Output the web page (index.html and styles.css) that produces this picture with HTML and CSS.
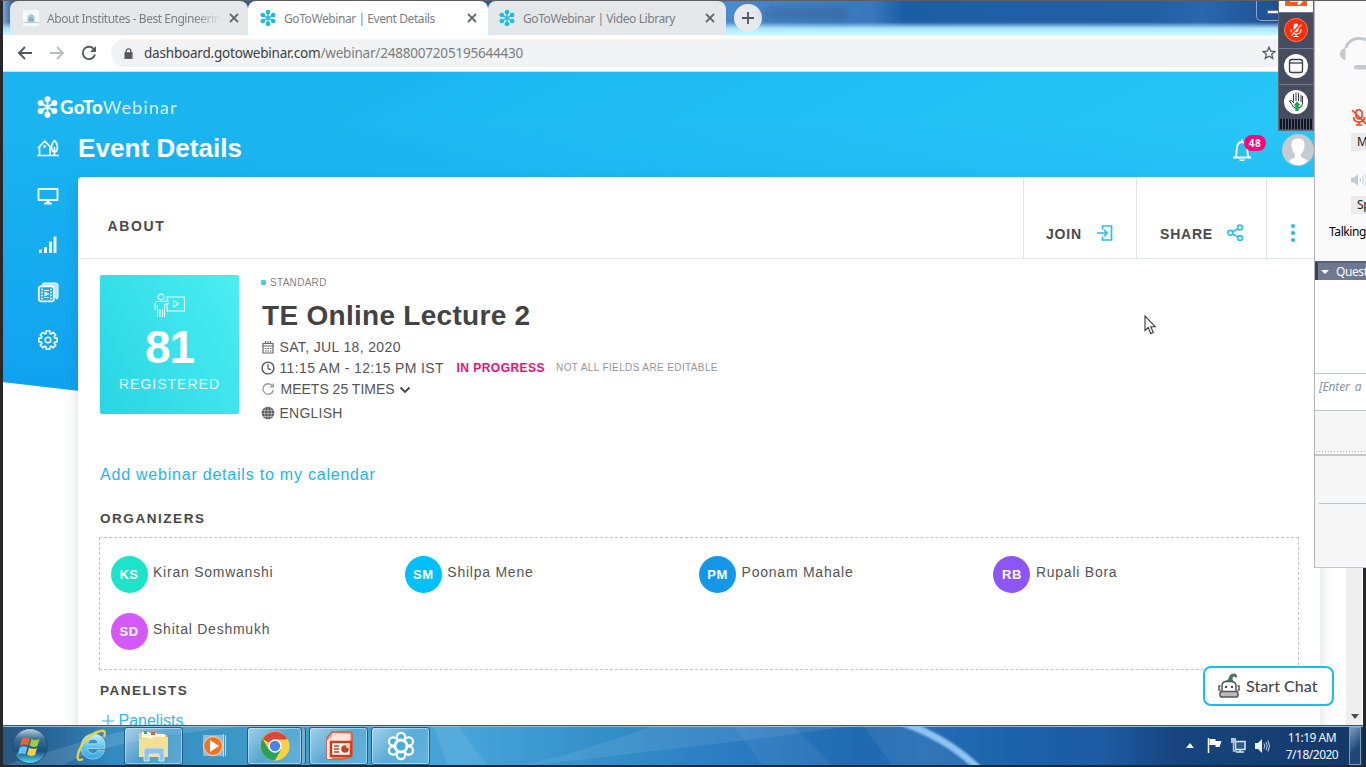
FILE: index.html
```html
<!DOCTYPE html>
<html lang="en">
<head>
<meta charset="utf-8">
<title>GoToWebinar | Event Details</title>
<link rel="stylesheet" href="styles.css">
</head>
<body>
<svg width="0" height="0" class="defs">
  <defs>
    <symbol id="daisy" viewBox="0 0 20 20"><g stroke="currentColor" stroke-width="1.8" fill="currentColor"><path d="M10 2.500v15M3.500 6.200l13 7.600M16.500 6.200l-13 7.600"/><circle cx="10" cy="2.600" r="2"/><circle cx="10" cy="17.400" r="2"/><circle cx="3.500" cy="6.200" r="2"/><circle cx="16.500" cy="6.200" r="2"/><circle cx="3.500" cy="13.800" r="2"/><circle cx="16.500" cy="13.800" r="2"/></g></symbol>
    <symbol id="close" viewBox="0 0 10 10"><path d="M1 1l8 8M9 1L1 9" stroke="#65686c" stroke-width="1.8"/></symbol>
    <linearGradient id="glass" x1="0" y1="0" x2="0" y2="1"><stop offset="0" stop-color="#bcd9e6"/><stop offset=".3" stop-color="#3f6c96"/><stop offset=".65" stop-color="#14527f"/><stop offset="1" stop-color="#5ee0f8"/></linearGradient>
    <linearGradient id="iebody" x1="0" y1="0" x2="0" y2="1"><stop offset="0" stop-color="#c4f1fd"/><stop offset=".5" stop-color="#5cc6f0"/><stop offset="1" stop-color="#3aa5de"/></linearGradient>
  </defs>
</svg>
<div class="screen">
  <header class="tabstrip">
    <div class="tab tab-first"><svg class="fav" viewBox="0 0 16 16"><path fill="#f4fafc" d="M0 0h16v16H0z"/><path d="M0 12h16v1H0z" fill="#a9cfdc"/><path d="M4.500 12V8q0-3 3.500-4 3.500 1 3.500 4v4z" fill="#a3cbd8"/><path d="M6.500 11V8.500M8 11V7M9.500 11V8.500" stroke="#6d9fb3"/></svg><span class="tab-title fade">About Institutes - Best Engineerin</span><svg class="x"><use href="#close"/></svg></div>
    <div class="tab active"><svg class="fav daisy"><use href="#daisy"/></svg><span class="tab-title">GoToWebinar | Event Details</span><svg class="x"><use href="#close"/></svg></div>
    <div class="tab tab-last"><svg class="fav daisy"><use href="#daisy"/></svg><span class="tab-title">GoToWebinar | Video Library</span><svg class="x"><use href="#close"/></svg></div>
    <div class="newtab"><svg width="12" height="12" viewBox="0 0 12 12"><path d="M6 0v12M0 6h12" stroke="#50565c" stroke-width="1.800"/></svg></div>
    <div class="ghost"></div>
    <div class="minimize"><i></i></div>
  </header>
  <div class="toolbar">
    <svg class="nav" viewBox="0 0 16 16"><path d="M15 8H2M8 2L2 8l6 6" fill="none" stroke="#55595d" stroke-width="1.900"/></svg>
    <svg class="nav" viewBox="0 0 16 16"><path d="M1 8h13M8 2l6 6-6 6" fill="none" stroke="#b9bbbd" stroke-width="1.900"/></svg>
    <svg class="nav" viewBox="0 0 16 16"><path d="M13.500 5A6.200 6.200 0 1 0 14 9.500" fill="none" stroke="#55595d" stroke-width="1.900"/><path d="M15 1v6H9z" fill="#55595d"/></svg>
    <div class="urlbar">
      <svg width="9" height="11" viewBox="0 0 10 12"><path d="M.5 4.500h9V12h-9z" fill="#55595d"/><path d="M2.500 5V3a2.500 2.200 0 0 1 5 0v2" fill="none" stroke="#55595d" stroke-width="1.400"/></svg>
      <span class="url">dashboard.gotowebinar.com<span>/webinar/2488007205195644430</span></span>
      <svg class="star" viewBox="0 0 14 14"><path d="M7 1.200l1.700 3.900 4.200.4-3.200 2.800 1 4.100L7 10.200l-3.700 2.200 1-4.100L1.100 5.500l4.200-.4z" fill="none" stroke="#55595d" stroke-width="1.300"/></svg>
    </div>
  </div>
  <div class="viewport">
    <main class="page">
      <div class="hero"></div>
      <div class="topbar">
        <div class="logo"><svg width="21" height="22"><use href="#daisy"/></svg><span class="goto">GoTo</span><span class="webinar">Webinar</span></div>
        <div class="title-row">
          <svg class="home" viewBox="0 0 22 18"><path d="M0 16.500h22M2.500 16V7.500L7.800 2 13 7.500V16M1 9l6.800-7 6.400 7M17.500 1.500c-3 2.500-4 7.500-1.700 11h3.400c2.300-3.500 1.300-8.500-1.700-11zM17.500 8v8" fill="none" stroke="#fff" stroke-width="1.700"/><circle cx="7.500" cy="7.500" r="1.400" fill="#fff"/></svg>
          <h1>Event Details</h1>
          <div class="bell"><svg width="20" height="24" viewBox="0 0 20 24"><path d="M1 19.500h18M3.500 19c1.300-2 1-4 1.200-8 .3-5 2.300-7 5.300-7s5 2 5.300 7c.2 4-.1 6 1.200 8M10 4V1.500" fill="none" stroke="#fff" stroke-width="1.900"/><path d="M7 21.500h6l-1 1.500H8z" fill="#fff"/></svg><span class="badge">48</span></div>
          <svg class="user" viewBox="0 0 32 32"><circle cx="16" cy="16" r="16" fill="#c6cbd1"/><path d="M16 4.500c-4.500 0-7 2.500-6.500 7 .3 4 1.500 7 3.500 8.500v3c-1.500 1.500-4 2-6 3.500 2 3 5 4.500 9 4.500s7.500-1.500 9.500-4.500c-2-1.500-5-2-6.500-3.500v-3c2-1.500 3.200-4.500 3.500-8.500.5-4.500-2-7-6.500-7z" fill="#fff"/></svg>
        </div>
      </div>
      <div class="body">
        <nav class="side">
          <svg viewBox="0 0 22 18"><path d="M1.500 1.500h19v11h-19z" fill="none" stroke="#effaff" stroke-width="1.900" stroke-linejoin="round"/><path d="M9.500 13h3v2h2.500v2H7v-2h2.500z" fill="#effaff"/></svg>
          <svg viewBox="0 0 22 18"><path d="M2 14h3v3.500H2zM7 11.500h3v6H7zM12 6h3v11.500h-3zM16.500 1h3v16.500h-3z" fill="#effaff"/></svg>
          <svg viewBox="0 0 22 20"><path d="M5 2.500Q5 .5 7 .5h12q2 0 2 2v12q0 2-2 2" fill="#b9e6fc" stroke="#fff"/><rect x="1.800" y="3.800" width="15" height="15" rx="2" fill="#1fa9f1" stroke="#fff" stroke-width="1.800"/><path d="M4 7h2M4 10h2M4 13h2M4 16h2M13 7h2M13 10h2M13 13h2M13 16h2" stroke="#fff" stroke-width="1.500"/><path d="M7 8h5M7 15h5" stroke="#fff"/><path d="M7.500 9l5 2.500-5 2.500z" fill="#fff"/></svg>
          <svg viewBox="0 0 22 22"><g transform="translate(11 10.500)" fill="none" stroke="#effaff" stroke-linejoin="round"><path stroke-width="1.800" d="M6.980-2.130L9.500-1.900V1.900L6.980 2.130 6.450 3.430 8.100 5.500 5.500 8.100 3.430 6.450 2.130 6.980 1.900 9.500H-1.900L-2.130 6.980-3.430 6.450-5.500 8.100-8.100 5.500-6.450 3.430-6.980 2.130-9.500 1.900V-1.900L-6.980-2.130-6.450-3.430-8.100-5.500-5.500-8.100-3.430-6.450-2.130-6.980-1.900-9.500H1.900L2.130-6.980 3.430-6.450 5.500-8.100 8.100-5.500 6.450-3.430z"/><circle r="2.900" stroke-width="1.700"/></g></svg>
        </nav>
        <section class="card">
          <div class="card-head">
            <h2>ABOUT</h2>
            <div class="action join">JOIN<svg width="16" height="16" viewBox="0 0 16 16"><path d="M5.500 4.500V1h9v14h-9v-3.500M0 8h10M7 4.800L10.200 8 7 11.200" fill="none" stroke="#2bbdf3" stroke-width="1.700"/></svg></div>
            <div class="action share">SHARE<svg width="17" height="18" viewBox="0 0 17 18"><g fill="none" stroke="#2bbdf3" stroke-width="1.600"><circle cx="13" cy="3.500" r="2.400"/><circle cx="13" cy="14" r="2.400"/><circle cx="3.300" cy="8.800" r="2.400"/><path d="M5.400 7.700L11 4.700M5.400 10l5.600 2.900"/></g></svg></div>
            <div class="action more"><svg width="6" height="20" viewBox="0 0 6 20"><g fill="#2bb9ee"><circle cx="3" cy="3" r="2.100"/><circle cx="3" cy="10" r="2.100"/><circle cx="3" cy="17" r="2.100"/></g></svg></div>
          </div>
          <div class="summary">
            <div class="tile">
              <svg width="31" height="26" viewBox="0 0 31 26"><g fill="none" stroke="#e4fdfd" stroke-width="1.100"><circle cx="7" cy="4" r="2.900"/><path d="M13 8V4h17.500v14H13v-7M19.500 7.500v6.500l5-3.200zM1 17v-5q0-3.500 3-3.500h6l5-.5M3.500 24V12M3.500 15v9M6 24v-8M8.500 24v-8M10.500 24V11.500l4.500-1"/></g></svg>
              <strong>81</strong><span>REGISTERED</span>
            </div>
            <div class="info">
              <div class="kind"><i></i>STANDARD</div>
              <h3>TE Online Lecture 2</h3>
              <div class="line date"><svg viewBox="0 0 14 14"><path d="M2 3.500h10v9.500H2zM2 6h10M4.500 1v3M9.500 1v3M7 1v3M4 8.500h1.500M6.500 8.500H8M9 8.500h1.500M4 11h1.500M6.500 11H8M9 11h1.500" fill="none" stroke="#666" stroke-width="1.200"/></svg><span>SAT, JUL 18, 2020</span></div>
              <div class="line time"><svg viewBox="0 0 14 14"><circle cx="7" cy="7" r="5.900" fill="none" stroke="#555" stroke-width="1.400"/><path d="M7 3v4.300l3 1.700" fill="none" stroke="#555" stroke-width="1.200"/></svg><span>11:15 AM - 12:15 PM IST</span><b>IN PROGRESS</b><small>NOT ALL FIELDS ARE EDITABLE</small></div>
              <div class="line meets"><svg viewBox="0 0 14 14"><path d="M11.500 4A5.200 5.200 0 1 0 12.300 8M12.300 1.500v3.300H9" fill="none" stroke="#999" stroke-width="1.300"/></svg><span>MEETS 25 TIMES</span><svg class="chev" viewBox="0 0 12 8"><path d="M1.500 1.500L6 6l4.500-4.500" fill="none" stroke="#444" stroke-width="1.900"/></svg></div>
              <div class="line lang"><svg viewBox="0 0 14 14"><circle cx="7" cy="7" r="6.300" fill="#555"/><path d="M1 4.500h12M.5 7.500h13M1.500 10.500h11M7 .5v13M4.500 1.200q-2 5.800 0 11.600M9.500 1.200q2 5.800 0 11.600" fill="none" stroke="#c8c8c8" stroke-width=".7"/></svg><span>ENGLISH</span></div>
            </div>
          </div>
          <a class="cal">Add webinar details to my calendar</a>
          <h4>ORGANIZERS</h4>
          <div class="people">
            <div><i class="ks">KS</i>Kiran Somwanshi</div>
            <div><i class="sm">SM</i>Shilpa Mene</div>
            <div><i class="pm">PM</i>Poonam Mahale</div>
            <div><i class="rb">RB</i>Rupali Bora</div>
            <div><i class="sd">SD</i>Shital Deshmukh</div>
          </div>
          <h4 class="pan">PANELISTS</h4>
          <a class="addpan"><svg width="12" height="12" viewBox="0 0 12 12"><path d="M6 0v12M0 6h12" stroke="#2bb9ee" stroke-width="1.200"/></svg>Panelists</a>
        </section>
      </div>
    </main>
    <div class="scroll"><i></i></div>
  </div>
  <footer class="taskbar">
    <svg class="wall" viewBox="0 0 1360 40" preserveAspectRatio="none"><g fill="#fff"><path d="M0 40Q60 20 140 0h100Q90 16 60 40z" opacity=".12"/><path d="M430 0h25l30 40h-40zM520 40Q720 18 850 0H650Q580 25 520 40z" opacity=".08"/><path d="M730 0h60l40 40h-70zM860 0h60l60 40h-90z" opacity=".06"/></g><path class="arc" d="M900-3Q944 12 976 43" fill="none" stroke="#8fc3f2" stroke-width="7"/></svg>
    <div class="start"><svg width="38" height="38" viewBox="0 0 38 38"><circle cx="19" cy="19" r="17.500" fill="url(#glass)" stroke="#244c75"/><path d="M11 12q4-2.500 8-.5l-2 7q-4-2-8 .3z" fill="#e8652f"/><path d="M20.500 12q4 2 8-.3l-2 7.300q-4 2-8-.4z" fill="#9bcf43"/><path d="M8.700 20.500q4-2.300 7.800-.2l-2 7q-3.700-2-7.700.4z" fill="#65c1ec"/><path d="M18 20.700q4 2.200 8 .2l-2 7q-4 2.200-8-.3z" fill="#fbd23d"/></svg></div>
    <div class="ie"><svg width="32" height="34" viewBox="0 0 32 34"><path fill-rule="evenodd" d="M17 5C10 5 5 10.500 5 18s5 12 12 12c6 0 10-3.500 11.500-8.500h-7Q20 24.500 17 24.500q-5-.3-5.300-5h17.200Q30 5 17 5zm-5.200 9.800Q12.500 10.300 17 10.300t5.200 4.500z" fill="url(#iebody)" stroke="#b9ebfb" stroke-width=".6"/><path d="M7 30Q-1 34 3 22 10 6 23 2.500 31-.5 28 8" fill="none" stroke="#efcf3d" stroke-width="2.400"/></svg></div>
    <div class="app"><svg width="34" height="32" viewBox="0 0 34 32"><path d="M2 3h5l2 2h21v22H2z" fill="#e9cf76"/><path d="M5 2h7v6H5zM12 3h8v6h-8zM20 4h8v6h-8z" fill="#fff8dc"/><path d="M7 1h3v3H7z" fill="#4ba757"/><path d="M14 2h4v3h-4z" fill="#dc5b38"/><path d="M2 9h13l2-2h14v20H2z" fill="#f5df92"/><path d="M7 31V20q0-2 3-2h14q3 0 3 2v11h-5v-7H12v7z" fill="#8cc4ec" stroke="#cde9fa"/></svg></div>
    <div class="wmp"><svg width="26" height="26" viewBox="0 0 26 26"><path d="M1 2h20v21H1z" fill="#83bce4"/><path d="M21.500 1v23M23.500 2v21" stroke="#b8e3f8"/><circle cx="11" cy="13" r="9.500" fill="#ed7426" stroke="#f6c098" stroke-width="1.500"/><path d="M8 7l9 6-9 6z" fill="#fff"/></svg></div>
    <div class="app chrome"><svg width="30" height="30" viewBox="0 0 30 30"><circle cx="15" cy="15" r="14.500" fill="#fad047"/><path d="M15 15L2.500 8A14.500 14.500 0 0 1 27.600 8z" fill="#dd4638"/><path d="M15 15l-6.300 3.600L2.500 7.800A14.500 14.500 0 0 0 15 29.500l6.300-11z" fill="#2ba25a"/><path d="M15 8.500h12.800A14.500 14.500 0 0 1 15 29.500l6.500-11z" fill="#fad047"/><circle cx="15" cy="15" r="6.700" fill="#fff"/><circle cx="15" cy="15" r="5.200" fill="#4b84e8"/></svg></div>
    <div class="app ppt"><svg width="30" height="32" viewBox="0 0 30 32"><path d="M3 8l5-6h18q2 0 2 3v20q-5 4-11 4H3z" fill="#efac91" stroke="#df5a35" stroke-width="1.500"/><path d="M3 10q5-1 6-7l17 1v8H8v17H3z" fill="#fbe5dc"/><rect x="7" y="12" width="20" height="14" fill="#fff" stroke="#cf3e1c" stroke-width="2.500"/><path d="M10 16h5M10 19h5M10 22h5" stroke="#c63b18" stroke-width="1.700"/><circle cx="21" cy="19" r="3.800" fill="#cf3e1c"/><path d="M22 18v-4h4v4z" fill="#ffc8ac"/></svg></div>
    <div class="app gotoapp"><svg width="28" height="30" viewBox="0 0 28 30"><g fill="#45aede" stroke="#fff" stroke-width="2.300"><circle cx="14" cy="6" r="4.200"/><circle cx="14" cy="24" r="4.200"/><circle cx="6.200" cy="10.500" r="4.200"/><circle cx="21.800" cy="10.500" r="4.200"/><circle cx="6.200" cy="19.500" r="4.200"/><circle cx="21.800" cy="19.500" r="4.200"/></g><circle cx="14" cy="15" r="7.500" fill="#fff"/><circle cx="14" cy="15" r="4.600" fill="#45aede"/></svg></div>
    <div class="tray">
      <svg width="8" height="5" viewBox="0 0 8 5"><path d="M0 5l4-5 4 5z" fill="#e6f2f8"/></svg>
      <svg width="15" height="15" viewBox="0 0 15 15"><path d="M1.500 0v15" stroke="#fff" stroke-width="1.500"/><path d="M2.500 1h6v2h6l-2 6h-4V7h-6z" fill="#fff"/></svg>
      <svg width="15" height="15" viewBox="0 0 15 15"><path d="M4.500 3.500h9.500v8H4.500zM9 12v2M5 14h8" fill="#2b5f91" stroke="#dfe9ef" stroke-width="1.500"/><path d="M0 0h5v5H0z" fill="#bac3c9"/><path d="M2.500 5v8H6" fill="none" stroke="#bac3c9" stroke-width="1.500"/></svg>
      <svg width="15" height="14" viewBox="0 0 15 14"><path d="M0 4h3l4-4v14l-4-4H0z" fill="#edf2f4"/><path d="M9 4.500q1.500 2.500 0 5M11 3q2.500 4 0 8M13 1.500q3 5.500 0 11" fill="none" stroke="#bdd3e4"/></svg>
    </div>
    <div class="clock"><span>11:19 AM</span><span>7/18/2020</span></div>
    <div class="desk"></div>
  </footer>

  <svg class="cursor" viewBox="0 0 12 20"><path d="M1 1v14.500l3.300-3 2.400 6 2.600-1.100-2.500-5.700h4.500z" fill="#fff" stroke="#33343c" stroke-width="1.100"/></svg>
  <div class="chat"><svg width="22" height="26" viewBox="0 0 22 26"><g fill="none" stroke="#555" stroke-width="1.500"><path d="M4 18v-5q0-4 3.500-4.500h6Q18 9 18 13v5"/><path d="M2.500 13H1v4h1.500M19.500 13H21v4h-1.500"/></g><rect x="2" y="18.500" width="18" height="5.500" rx="1.500" fill="#bbb" stroke="#555" stroke-width="1.500"/><circle cx="8" cy="14" r="1.200" fill="#444"/><circle cx="14" cy="14" r="1.200" fill="#444"/><path d="M7 8.500q4-.5 4.500-4.500 1-3.500 5-3 2.500.3 2 3.200-3-2.200-4.300 0-.8 2 .8 4.300z" fill="#477b67" stroke="#41524c" stroke-width=".8"/></svg>Start Chat</div>

  <aside class="grab">
    <div class="g-arrow"><i><svg width="22" height="6" viewBox="0 0 22 6"><path d="M5 .5h11M16.500-1v2L13 4.500" fill="none" stroke="#fff" stroke-width="2.500"/></svg></i></div>
    <div class="g-cell"><svg viewBox="0 0 24 24"><circle cx="12" cy="12" r="11.500" fill="#ff2d0a" stroke="#ff7b5e"/><rect x="9.500" y="5.500" width="5" height="8.500" rx="2.500" fill="#fff"/><path d="M7 11.500q0 4.500 5 4.500t5-4.500M12 16v2.500M9.500 18.500h5" fill="none" stroke="#fff" stroke-width="1.200"/><path d="M6.500 17.500l11-12" stroke="#ff2d0a" stroke-width="2.500"/><path d="M7 18L17.500 6.500" stroke="#fff" stroke-width="1.100"/></svg></div>
    <div class="g-cell"><svg viewBox="0 0 24 24"><circle cx="12" cy="12" r="12" fill="#fff"/><rect x="5.500" y="5.500" width="13" height="13" rx="2.200" fill="none" stroke="#3a3d49" stroke-width="1.300"/><path d="M5.500 9h13" stroke="#3a3d49" stroke-width="1.300"/></svg></div>
    <div class="g-cell"><svg viewBox="0 0 24 24"><circle cx="12" cy="12" r="12" fill="#fff"/><path d="M9.500 11.500V4M12 11V2.500M14.500 11V3M17 12V5M18.500 6v7q0 4.500-4 5h-3Q9 17.500 8 14.500l-2.500-3.500 2-.5L10 13" fill="none" stroke="#33363f" stroke-width="1"/><path d="M13 11.500l4 4h-2.300V21h-3.400v-5.500H9.500z" fill="#14a653"/></svg></div>
    <div class="g-grip"></div>
  </aside>

  <aside class="panel">
    <div class="audio">
      <svg class="headset" viewBox="0 0 27 36"><path d="M7 13Q9 5 18 3.500q5-.5 9 1.500" fill="none" stroke="#c3c9cf" stroke-width="3"/><path d="M6.500 13v12Q1 24 1 19t5.500-6z" fill="#c3c9cf"/><rect x="15" y="30" width="14" height="4.500" rx="2.200" fill="#c3c9cf"/></svg>
      <svg class="mute" viewBox="0 0 15 17"><path d="M5 2q3-3 6 1v5q-3 4-6 0zM2.500 8q0 5 5.500 5t5.500-5M8 13v3M5 16h6M1 1l14 14" fill="none" stroke="#ff3b16" stroke-width="1.600"/></svg>
      <span class="btn">Mute</span>
      <svg class="speaker" viewBox="0 0 15 12"><path d="M0 3.500h3L7 0v12L3 8.500H0z" fill="#c3cdd5"/><path d="M9 4q1.300 2 0 4M11.500 2q2.500 4 0 8M14 .5q3 5.500 0 11" fill="none" stroke="#c3cdd5"/></svg>
      <span class="btn">Speaker</span>
      <span class="talk">Talking:</span>
    </div>
    <div class="q-head"><i></i>Questions</div>
    <div class="q-log"></div>
    <div class="q-input">[Enter a question]</div>
    <div class="q-foot"></div>
    <div class="q-id"></div>
  </aside>
</div>
</body>
</html>
```
FILE: styles.css
```css
* { box-sizing: border-box; }
body { margin: 0; font-family: "Liberation Sans", Arial, sans-serif; color: #4a4a4a; }
svg { display: block; flex: none; }
h1, h2, h3, h4 { margin: 0; }
.defs { position: absolute; }
.screen { position: relative; width: 1366px; height: 767px; overflow: hidden; background: #26282b; border: solid #26282b; border-width: 1px 0 2px 3px; border-top-color: #5c5f61; padding-right: 3px; display: flex; flex-direction: column; }

.tabstrip { height: 34px; flex: none; display: flex; background: linear-gradient(180deg, transparent 62%, #a9e3fa 80%, #c2f5ff 95%), linear-gradient(90deg, #7da4d2 0, #2c5ea4 10px, #1f59a2 700px, #4c8acb 725px, #3877bb 870px, #1c5ea5 900px, #235fa3 1150px, #2867ac 1200px, #1d4f8e 1280px); }
.tab { width: 238px; height: 34px; padding: 0 11px 0 12px; display: flex; align-items: center; background: #e5e8eb; border-radius: 8px 8px 0 6px; font: 12px "Noto Sans", "Open Sans", sans-serif; color: #7b7e82; }
.tab-first { margin-left: 7px; border-radius: 8px; padding-right: 9px; }
.tab-last { padding-left: 11px; }
.tab.active { background: #fff; width: 240px; border-radius: 8px 8px 0 0; }
.fav { width: 16px; height: 16px; margin-right: 8px; }
.tab-first .fav { margin-left: 1px; }
.daisy { color: #1ebddd; }
.tab-title { flex: 1; white-space: nowrap; overflow: hidden; letter-spacing: -.42px; }
.fade { letter-spacing: -.46px; margin-right: 8px; -webkit-mask-image: linear-gradient(90deg, #000 85%, transparent); mask-image: linear-gradient(90deg, #000 85%, transparent); }
.x { width: 10px; height: 10px; }
.newtab { width: 28px; height: 28px; margin: 3px 0 0 8px; border-radius: 50%; background: #e6eaed; display: grid; place-items: center; }
.ghost { width: 84px; height: 13px; margin: 6px 0 0 2px; background: #315784; opacity: .4; filter: blur(4px); }
.minimize { margin-left: 408px; width: 40px; height: 20px; border: 1px solid #8ba9c9; border-top: 0; border-radius: 0 0 0 5px; padding: 9px 0 0 10px; }
.minimize i { display: block; width: 12px; height: 4px; background: #f2eeee; border: 1px solid #69788c; }

.toolbar { height: 37px; flex: none; display: flex; align-items: center; background: #fff; border-bottom: 1px solid #bce6f4; padding-left: 14px; }
.nav { width: 16px; height: 16px; margin-right: 16px; }
.urlbar { flex: 1; height: 28px; border-radius: 14px 0 0 14px; margin-left: -2px; padding-left: 13px; display: flex; align-items: center; background: #f1f3f4; }
.url { margin-left: 11px; font: 13.500px "Noto Sans", "Open Sans", sans-serif; color: #3c3f42; white-space: nowrap; letter-spacing: -.2px; }
.url span { color: #7a7d80; }
.star { width: 14px; height: 14px; margin-left: 739px; }

.viewport { flex: 1; min-height: 0; display: flex; }
.page { flex: 1; position: relative; min-width: 0; overflow: hidden; background: #fff; }
.hero { position: absolute; inset: 0 0 auto 0; height: 465px; background: linear-gradient(153deg, #1cb5f2 0, #1ab5f0 15%, #20bdf3 35%, #28c6f6 60%, #2acbfa 100%); clip-path: polygon(0 0, 100% 0, 100% 100%, 0 310px); }
.hero::after { content: ""; position: absolute; inset: 0; background: linear-gradient(180deg, transparent 50px, #0b9bef 340px); opacity: .85; }
.topbar { position: relative; height: 105px; padding: 23px 0 0 34px; color: #fff; }
.logo { display: flex; align-items: center; height: 24px; font-family: Lato, sans-serif; font-size: 18px; }
.goto { font-weight: 900; margin-left: 2px; font-size: 18.500px; letter-spacing: .4px; }
.webinar { font-weight: 400; letter-spacing: 1.100px; opacity: .85; }
.title-row { display: flex; align-items: center; height: 34px; margin-top: 12px; }
.home { width: 22px; height: 18px; }
h1 { font-size: 26px; line-height: 30px; letter-spacing: .06px; margin-left: 19px; width: 1154px; }
.bell { position: relative; width: 50px; height: 24px; margin-top: 4px; }
.badge { position: absolute; left: 12px; top: -3px; width: 22px; height: 16px; border-radius: 8px; background: #f40b7b; font: 700 10px/16px "Noto Sans", sans-serif; letter-spacing: .5px; text-align: center; }
.user { width: 32px; height: 32px; margin-top: 4px; }
.body { display: flex; position: relative; }
.side { width: 75px; padding: 9px 0 0 34px; display: flex; flex-direction: column; gap: 27px; }
.side svg { width: 22px; height: 21px; }
.card { width: 1242px; height: 560px; background: #fff; border-radius: 4px 4px 0 0; box-shadow: 0 6px 14px rgba(60, 80, 90, .2); }
.card-head { display: flex; height: 82px; border-bottom: 1px solid #e1e4ea; }
h2 { font-size: 14px; letter-spacing: 1.650px; width: 945px; padding: 41px 0 0 29.500px; line-height: 16px; }
.action { display: flex; align-items: center; padding-top: 32px; border-left: 1px solid #e1e4ea; font-weight: 700; font-size: 14px; letter-spacing: .8px; }
.action svg { margin-top: -1px; }
.join { width: 113px; padding-left: 22px; }
.join svg { margin-left: 15px; }
.share { width: 130px; padding-left: 23px; }
.share svg { margin-left: 14px; }
.more { width: 54px; padding-left: 23px; }
.summary { display: flex; padding: 16px 0 0 22px; }
.tile { width: 139px; height: 139px; border-radius: 2px; background: linear-gradient(60deg, #29d5e3, #4beef2); color: #fff; display: flex; flex-direction: column; align-items: center; padding-top: 18px; }
.tile strong { font-size: 46px; line-height: 48px; margin-top: 4px; letter-spacing: -1px; }
.tile span { font-size: 14px; letter-spacing: 1px; line-height: 16px; margin-top: 5px; color: #e0fcfc; }
.info { margin-left: 22px; }
.kind { display: flex; align-items: center; height: 15px; font-size: 10px; letter-spacing: .3px; color: #7f7f86; }
.kind i { width: 5px; height: 5px; border-radius: 1px; background: #4dd0d8; margin-right: 4px; }
h3 { font-size: 28px; letter-spacing: .29px; line-height: 32px; margin: 10px 0 0 1px; color: #434343; }
.line { display: flex; align-items: center; height: 21px; font-size: 14px; letter-spacing: .36px; white-space: nowrap; color: #555; }
.line svg { width: 14px; height: 14px; margin-right: 4.500px; }
.date { margin-top: 4px; }
.line b { color: #ed0f75; font-size: 12px; letter-spacing: .48px; margin-left: 12.500px; }
.line small { color: #94949c; font-size: 10px; letter-spacing: .38px; margin-left: 11px; }
.meets span { letter-spacing: 0; margin-left: 1px; }
.line .chev { width: 12px; height: 8px; margin: 2px 0 0 4px; }
.lang { margin-top: 3px; letter-spacing: .25px; }
.cal { display: block; margin: 42px 0 0 22px; font-size: 16px; line-height: 20px; letter-spacing: .78px; color: #24b4ee; }
h4 { margin: 26px 0 0 22px; font-size: 13.500px; line-height: 16px; letter-spacing: 1.550px; color: #474747; }
.people { margin: 10px 0 0 21px; width: 1200px; height: 133px; border: 1px dashed #c5c5c5; padding: 18px 0 0 10.500px; display: grid; grid-template-columns: repeat(4, 294.300px); grid-auto-rows: 57px; font-size: 14px; letter-spacing: .76px; color: #555; }
.people div { display: flex; align-items: flex-start; line-height: 33px; }
.people i { width: 37px; height: 37px; border-radius: 50%; margin-right: 5.500px; display: grid; place-items: center; color: #fff; font: 700 13px "Liberation Sans", Arial, sans-serif; letter-spacing: .5px; }
.ks { background: #1de4c8; }
.sm { background: #00c0fb; }
.pm { background: #1597e9; }
.rb { background: #8e55f5; }
.sd { background: #d558fa; }
.pan { margin-top: 13px; letter-spacing: 1.5px; }
.addpan { display: flex; align-items: center; margin: 12px 0 0 23.500px; gap: 5px; font-size: 16px; line-height: 20px; color: #2bb9ee; }
.scroll { width: 17px; background: #efefef; border-right: 1px solid #fff; display: flex; align-items: flex-end; padding: 0 0 6px 5px; }
.scroll i { border: 4px solid transparent; border-top: 5px solid #4c4c4c; border-bottom: 0; }

.taskbar { height: 40px; flex: none; position: relative; display: flex; align-items: center; overflow: hidden; border-top: 1px solid #375c70; box-shadow: inset 0 1px #90b9d3; background: linear-gradient(90deg, #28577f 0, #2a6b9f 60px, #328bc0 110px, #419ecb 300px, #47a4da 460px, #348fc9 600px, #2b7cc2 730px, #1f69b0 860px, #256eb5 920px, #1b62aa 1010px, #1d5ba3 1100px, #174580 1170px, #143766 1360px); }
.wall { position: absolute; inset: 0; width: 1360px; height: 40px; }
.arc { filter: blur(1px); }
.taskbar > div { position: relative; flex: none; }
.start { width: 70px; padding-left: 8px; }
.ie { width: 51px; padding-left: 3px; }
.app { width: 59px; height: 38px; display: grid; place-items: center; border: 1px solid #255b80; border-radius: 3px; box-shadow: inset 0 0 0 1px rgba(220, 245, 255, .5); background: linear-gradient(135deg, rgba(225, 243, 252, .6), rgba(130, 190, 225, .35) 50%, rgba(150, 205, 230, .4)); }
.wmp { width: 64px; padding-left: 19px; }
.chrome { width: 55px; margin-right: 7px; box-shadow: inset 0 0 0 1px rgba(220, 245, 255, .5), 4px 0 0 -1px #75acd0, 5px 0 0 -1px #255b80; }
.ppt { width: 59px; margin-right: 3px; }
.tray { width: 92px; margin-left: 756px; display: flex; align-items: center; gap: 9px; }
.tray svg:first-child { margin-right: 4px; }
.clock { width: 62px; font: 12px/17px "Noto Sans", "Open Sans", sans-serif; letter-spacing: -.5px; color: #f3f8fb; display: flex; flex-direction: column; align-items: center; margin-left: 3px; white-space: nowrap; }
.desk { width: 12px; height: 38px; margin-left: 6px; border: 1px solid #7f9dbb; background: linear-gradient(135deg, #7c9abb, #1e4777 60%); }

.cursor { position: absolute; left: 1141px; top: 314px; width: 12px; height: 20px; }
.chat { position: absolute; left: 1200px; top: 665px; width: 131px; height: 40px; border: 2px solid #12c0f1; border-radius: 8px; background: #fff; display: flex; align-items: center; padding: 0 0 1px 13px; gap: 6px; font: 500 16px Lato, sans-serif; letter-spacing: .05px; color: #484848; white-space: nowrap; }

.grab { position: absolute; left: 1275px; top: -1px; width: 36px; height: 131px; background: #474d5e; border: 1px solid #656b7d; border-width: 0 1px 1px; display: flex; flex-direction: column; }
.g-arrow { height: 12px; background: #fff; padding-left: 6px; flex: none; }
.g-arrow i { display: block; width: 22px; height: 6px; background: #fe5c18; overflow: hidden; }
.g-cell { height: 36px; flex: none; border-top: 1px solid #6d7c94; display: grid; justify-items: center; padding-top: 5px; }
.g-cell svg { width: 24px; height: 24px; }
.g-grip { flex: 1; margin: -1px 0 1px 1px; background: repeating-linear-gradient(90deg, #111622 0 2px, #596074 2px 3px); }

.panel { position: absolute; left: 1311px; top: -1px; width: 52px; height: 568px; overflow: hidden; border-left: 1px solid #b3b5ba; border-bottom: 1px solid #c3c5cb; background: #f6f6f6; font: 12px "Noto Sans", "Open Sans", sans-serif; letter-spacing: -.4px; color: #222; display: flex; flex-direction: column; }
.audio { height: 261px; flex: none; background: #fafafa; padding-left: 36px; white-space: nowrap; }
.headset { width: 27px; height: 36px; margin: 35px 0 0 -12px; }
.mute { width: 15px; height: 17px; margin: 38px 0 7px; }
.audio .btn { display: block; width: 50px; height: 18px; background: #ebebeb; padding-left: 6px; line-height: 17px; }
.speaker { width: 15px; height: 12px; margin: 23px 0 10px; }
.talk { display: block; margin: 9px 0 0 -22px; line-height: 17px; color: #000; }
.q-head { height: 19px; flex: none; border-top: 2px solid #586178; border-left: 3px solid #394257; background: #6c7990; color: #fff; display: flex; align-items: center; gap: 7px; padding-left: 3px; }
.q-head i { border: 4px solid transparent; border-top: 4px solid #fff; border-bottom: 0; }
.q-log { height: 94px; flex: none; background: #fff; border-bottom: 1px solid #bfc3ca; }
.q-input { height: 37px; flex: none; background: #fff; border-bottom: 1px solid #bfc3ca; padding: 4px; line-height: 17px; font-style: italic; color: #8495a8; white-space: nowrap; letter-spacing: -.1px; word-spacing: 2px; }
.q-foot { height: 45px; flex: none; border-bottom: 2px solid #c6c6c6; background: radial-gradient(circle, #aaa 0 .6px, transparent .8px) 0 39px / 3px 3px repeat-x #f6f6f6; }
.q-id { height: 48px; flex: none; margin-left: 4px; border-bottom: 1px solid #bfc3ca; }
```
